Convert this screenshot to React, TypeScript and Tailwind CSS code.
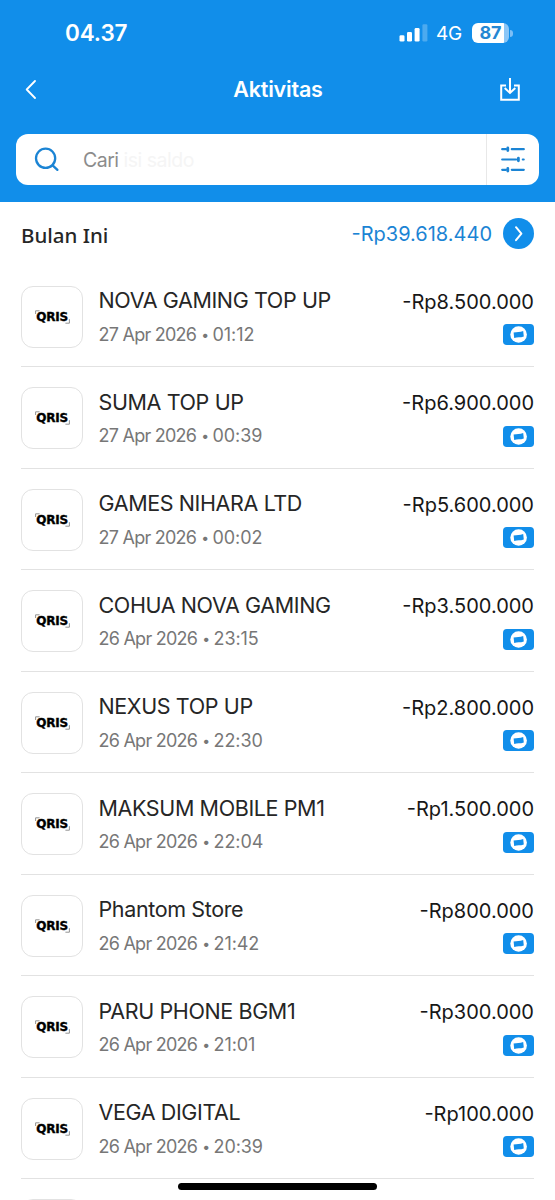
interface Transaction {
  name: string;
  date: string;
  time: string;
  amount: string;
}

const transactions: Transaction[] = [
  { name: 'NOVA GAMING TOP UP', date: '27 Apr 2026', time: '01:12', amount: '-Rp8.500.000' },
  { name: 'SUMA TOP UP', date: '27 Apr 2026', time: '00:39', amount: '-Rp6.900.000' },
  { name: 'GAMES NIHARA LTD', date: '27 Apr 2026', time: '00:02', amount: '-Rp5.600.000' },
  { name: 'COHUA NOVA GAMING', date: '26 Apr 2026', time: '23:15', amount: '-Rp3.500.000' },
  { name: 'NEXUS TOP UP', date: '26 Apr 2026', time: '22:30', amount: '-Rp2.800.000' },
  { name: 'MAKSUM MOBILE PM1', date: '26 Apr 2026', time: '22:04', amount: '-Rp1.500.000' },
  { name: 'Phantom Store', date: '26 Apr 2026', time: '21:42', amount: '-Rp800.000' },
  { name: 'PARU PHONE BGM1', date: '26 Apr 2026', time: '21:01', amount: '-Rp300.000' },
  { name: 'VEGA DIGITAL', date: '26 Apr 2026', time: '20:39', amount: '-Rp100.000' },
];

function StatusBar() {
  return (
    <div className="flex h-[66px] items-center justify-between pl-[65px] pr-[42px] text-white">
      <span className="text-[22.5px] font-semibold leading-none tracking-[-0.1px]">04.37</span>
      <div className="flex items-center">
        <svg width="29" height="18" viewBox="0 0 29 18" fill="currentColor">
          <rect x="0.5" y="11.3" width="5" height="6.2" rx="1.3" />
          <rect x="8" y="8" width="5" height="9.5" rx="1.3" />
          <rect x="15.6" y="4" width="5" height="13.5" rx="1.3" />
          <rect x="23.4" y="0.2" width="5" height="17.3" rx="1.3" opacity="0.25" />
        </svg>
        <span className="ml-2 text-[19px] leading-none tracking-[-0.2px]">4G</span>
        <div className="ml-[10px] flex items-center">
          <div className="flex h-5 w-[37px] items-center justify-center rounded-[6px] bg-[linear-gradient(90deg,white_87%,#8ac6f7_87%)] text-[18px] font-bold leading-none text-[#2487d3]">
            87
          </div>
          <div className="ml-[1px] h-[7px] w-[3px] rounded-r-full bg-[#7dbff6]" />
        </div>
      </div>
    </div>
  );
}

function Header() {
  return (
    <header className="h-[202px] bg-[#118eea]">
      <StatusBar />
      <div className="flex h-[47px] items-center justify-between pl-[25px] pr-[34px] text-white">
        <svg width="12" height="20" viewBox="0 0 12 20" fill="none" stroke="currentColor" strokeWidth="1.8" strokeLinecap="round" strokeLinejoin="round">
          <path d="M10 1 1.7 9.5 10 18" />
        </svg>
        <h1 className="ml-5 text-[21.5px] font-semibold leading-none tracking-[-0.2px]">Aktivitas</h1>
        <svg width="22" height="26" viewBox="0 0 22 26" fill="none" stroke="currentColor" strokeWidth="2">
          <path d="M7 8.5H2.2v14.3h17.6V8.5H15" />
          <path d="M11 1v15M5.7 11l5.3 5 5.3-5" />
        </svg>
      </div>
      <div className="mx-4 mt-[21px] flex h-[51px] rounded-[12px] bg-white">
        <div className="flex flex-1 items-center pl-[18px]">
          <svg width="26" height="26" viewBox="0 0 26 26" fill="none" stroke="#1b84d4" strokeWidth="2.3" strokeLinecap="round">
            <circle cx="11.6" cy="11.3" r="9.6" />
            <path d="m18.6 18.3 4.8 4.6" />
          </svg>
          <p className="ml-[23px] mt-[2px] text-[19.5px] leading-none tracking-[-0.5px] text-[#8c8c8c]">
            Cari <span className="text-[#f5f5f5]">isi saldo</span>
          </p>
        </div>
        <div className="flex w-[53px] items-center justify-center border-l border-[#e8e8e8]">
          <svg width="24" height="28" viewBox="0 0 24 28" fill="none" stroke="#1b84d4" strokeWidth="2.2" strokeLinecap="round">
            <path d="M1.2 3.2H5M10.8 3.2h12M1.2 13.5h14M21.8 13.5h.9M1.2 23.8H5M10.8 23.8h12" />
            <path d="M6.8 1.9v2.6M17.4 12.2v2.6M6.8 22.5v2.6" strokeWidth="2.8" />
          </svg>
        </div>
      </div>
    </header>
  );
}

function QrisLogo() {
  return (
    <div className="flex size-[62px] shrink-0 items-center justify-center rounded-[12px] border-[1.5px] border-[#e2e2e2] bg-white">
      <div className="relative flex h-[14px] w-[35px] items-center justify-center">
        <span className="font-['DejaVu_Sans',sans-serif] text-[12px] font-bold leading-none tracking-[-0.2px] text-black [-webkit-text-stroke:0.4px_black]">QRIS</span>
        <svg className="absolute inset-0" width="35" height="14" viewBox="0 0 35 14" fill="none" stroke="#777777" strokeWidth="0.8">
          <path d="M.6 4V.8h4M34.4 9.2v4h-4" />
        </svg>
      </div>
    </div>
  );
}

function WalletBadge() {
  return (
    <svg width="31" height="21" viewBox="0 0 31 21">
      <rect width="31" height="21" rx="3.8" fill="#118eea" />
      <circle cx="15.6" cy="10.5" r="8.3" fill="white" />
      <path d="M10.6 8.6c3.6-1.1 6.2-.3 9.6-1.7l.6 5.6c-3.6 1.4-6.4.4-9.6 1.6z" fill="#118eea" />
    </svg>
  );
}

function TransactionRow({ item }: { item: Transaction }) {
  return (
    <li className="flex h-[101.5px] border-b-[1.5px] border-[#e2e2e2] pt-5">
      <QrisLogo />
      <div className="ml-[15.5px] flex-1">
        <p className="mt-[1.5px] whitespace-nowrap text-[21.5px] leading-[26px] tracking-[-0.38px] text-[#262626]">{item.name}</p>
        <div className="mt-[10.5px] flex items-center whitespace-nowrap text-[18px] leading-[22px] text-[#777777]">
          <span className="tracking-[-0.75px]">{item.date}</span>
          <span className="ml-[5px] mr-[3.5px] text-[14px]">•</span>
          <span className="tracking-[-0.1px]">{item.time}</span>
        </div>
      </div>
      <div className="flex flex-col items-end">
        <p className="mt-[3px] whitespace-nowrap text-[20px] leading-[26px] text-[#171717]">{item.amount}</p>
        <div className="mt-[9.5px]">
          <WalletBadge />
        </div>
      </div>
    </li>
  );
}

export default function App() {
  return (
    <div className="relative h-[1200px] w-[555px] overflow-hidden bg-white font-['Inter',sans-serif]">
      <Header />
      <section className="px-[21px]">
        <div className="flex h-[63.5px] items-center justify-between">
          <h2 className="mt-[2px] font-['Noto_Sans','Open_Sans',sans-serif] text-[20.5px] font-medium leading-none text-[#262626]">Bulan Ini</h2>
          <div className="flex items-center gap-[11px]">
            <span className="text-[20px] leading-none text-[#1b84d4]">-Rp39.618.440</span>
            <svg width="31" height="31" viewBox="0 0 31 31" fill="none">
              <circle cx="15.5" cy="15.5" r="15.5" fill="#118eea" />
              <path d="m13 9.2 5.4 6.4-5.4 6.6" stroke="white" strokeWidth="2" strokeLinecap="round" strokeLinejoin="round" />
            </svg>
          </div>
        </div>
        <ul>
          {transactions.map((item) => (
            <TransactionRow key={item.name} item={item} />
          ))}
        </ul>
        {/* top edge of the next row's tile */}
        <div className="mt-5 size-[62px] rounded-[12px] border-[1.5px] border-[#e2e2e2]" />
      </section>
      <div className="absolute bottom-[10px] left-[178px] h-[7px] w-[199px] rounded-full bg-black" />
    </div>
  );
}
